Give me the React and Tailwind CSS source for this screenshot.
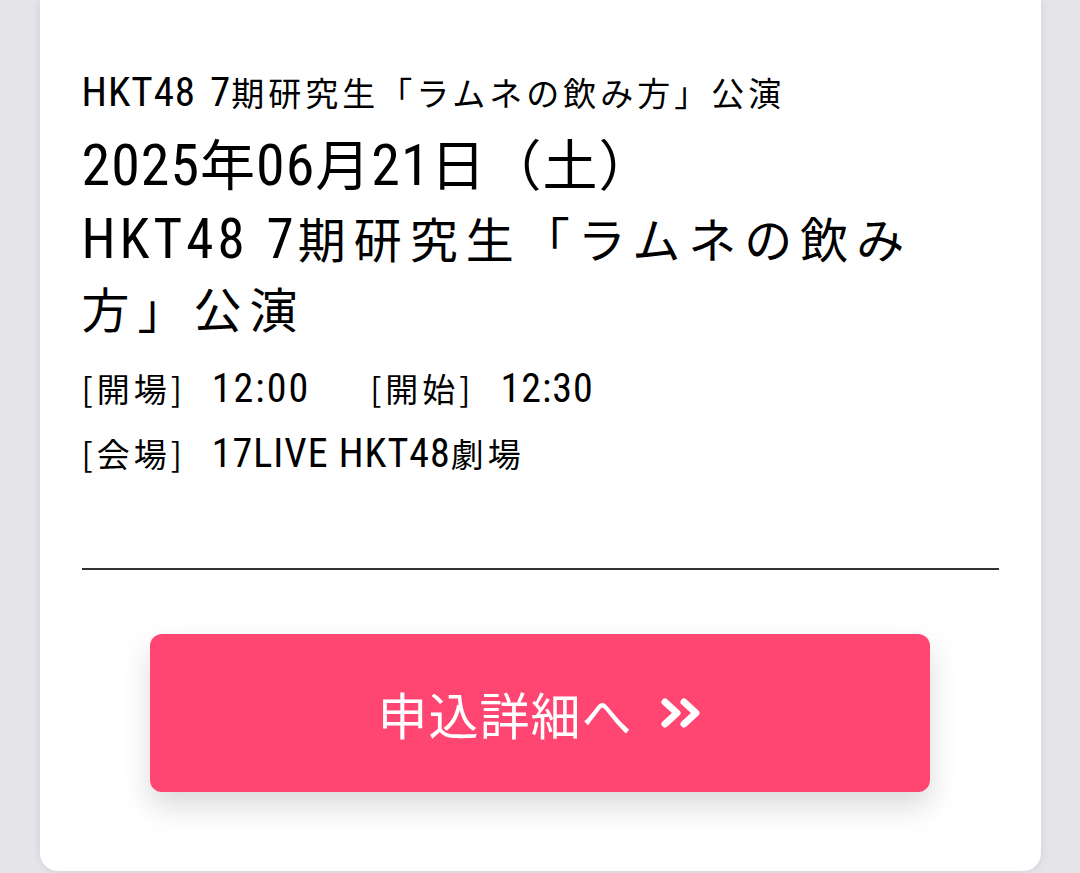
import React from 'react';

// Latin bits are set in a narrow face, CJK falls through to Noto
const L = ({ children, className = '' }) => (
    <span className={`font-['Roboto_Condensed','Liberation_Sans_Narrow','DejaVu_Sans_Condensed','Noto_Sans_CJK_JP',sans-serif] ${className}`}>
        {children}
    </span>
);

const Chevrons = () => (
    <svg viewBox="0 0 43 32" className="ml-[27px] w-[43px] h-[32px]" fill="none" stroke="currentColor" strokeWidth="7" strokeLinecap="round" strokeLinejoin="round">
        <polyline points="5,5 17,16 5,27" />
        <polyline points="24,5 36,16 24,27" />
    </svg>
);

export default function App() {
    return (
        <div className="min-h-[873px] bg-[#e5e4e8] flex justify-center overflow-hidden font-['Noto_Sans_CJK_JP',sans-serif] text-black">
            <div className="w-[1001px] h-[871px] bg-white rounded-b-[18px] shadow-[0_0_10px_rgba(0,0,0,0.09)] px-[42px] pt-[69px]">
                <div className="text-[33px] leading-[46px] tracking-[4px] whitespace-nowrap">
                    <L className="text-[41px] tracking-[1px]">HKT48</L>
                    <L className="text-[41px] tracking-[1px] ml-[14px]">7</L>期研究生「ラムネの飲み方」公演
                </div>

                <div className="mt-[10px] text-[55px] leading-[72px] tracking-[1px] whitespace-nowrap">
                    <L className="text-[58px] tracking-[1px]">2025</L>年<L className="text-[58px] tracking-[1px]">06</L>月<L className="text-[58px] tracking-[1px]">21</L>日（土）
                </div>

                <div className="mt-[2px] text-[48px] leading-[68px] tracking-[8px] w-[890px]">
                    <L className="text-[55px] tracking-[4px]">HKT48</L>
                    <L className="text-[55px] tracking-[4px] ml-[18px]">7</L>期研究生「ラムネの飲み方」公演
                </div>

                <div className="mt-[24px] text-[33px] leading-[46px] tracking-[4px] whitespace-nowrap">
                    [開場]<L className="text-[40px] tracking-[2px] ml-[26px]">12:00</L>
                    <span className="ml-[60px]">[開始]</span><L className="text-[40px] tracking-[1px] ml-[26px]">12:30</L>
                </div>

                <div className="mt-[18px] text-[33px] leading-[46px] tracking-[4px] whitespace-nowrap">
                    [会場]<L className="text-[40px] tracking-[1px] ml-[26px]">17LIVE HKT48</L>劇場
                </div>

                <div className="mt-[91px] h-[2px] bg-[#2f3336]" />

                <div className="mt-[64px] flex justify-center">
                    <button className="w-[780px] h-[158px] rounded-[12px] bg-[#ff4571] text-white shadow-[0_14px_30px_rgba(0,0,0,0.15)] flex items-center justify-center">
                        <span className="text-[50px] leading-[60px] tracking-[1px] whitespace-nowrap">申込詳細へ</span>
                        <Chevrons />
                    </button>
                </div>
            </div>
        </div>
    );
}
